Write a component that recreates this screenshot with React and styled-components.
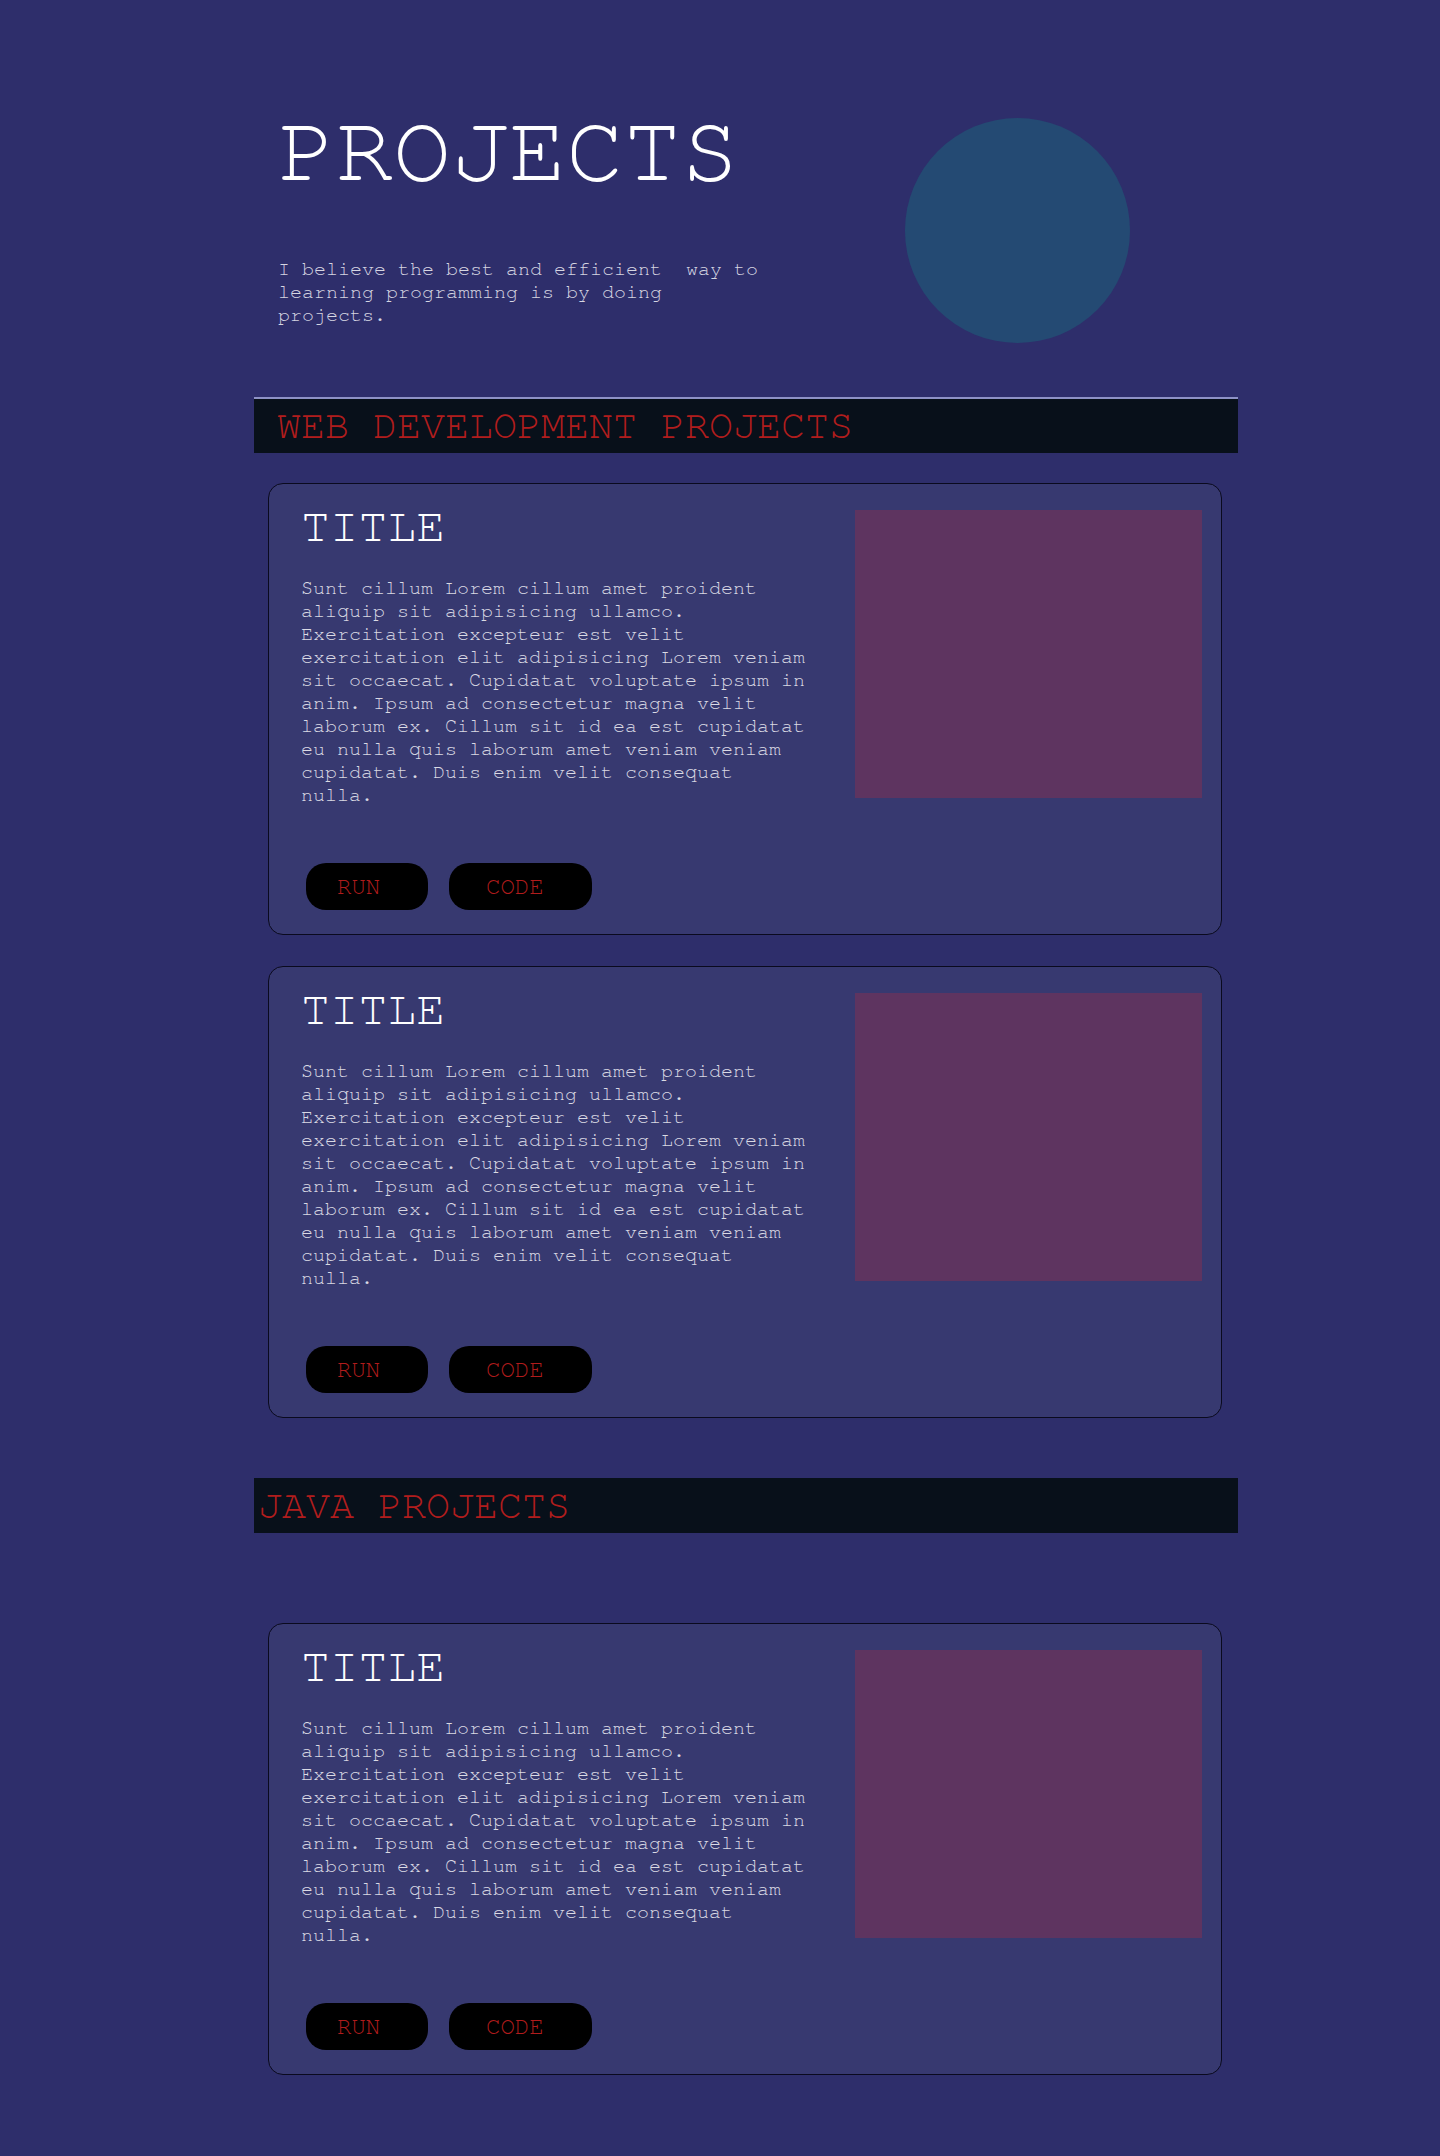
import React from 'react';
import styled, { createGlobalStyle } from 'styled-components';

const GlobalStyle = createGlobalStyle`
  html, body {
    margin: 0;
    padding: 0;
    background-color: #2e2e6b;
  }
  body {
    font-family: "FreeMono", "Nimbus Mono PS", "Nimbus Mono L", "Courier 10 Pitch", "Liberation Mono", monospace;
  }
`;

const Page = styled.div`
  width: 984px;
  margin-left: 254px;
  padding-top: 104px;
  padding-bottom: 79px;
`;

const Hero = styled.header`
  display: flex;
  justify-content: space-between;
  align-items: flex-start;
  padding: 0 108px 0 24px;
  margin-bottom: 54px;
`;

const HeroText = styled.div`
  width: 490px;
`;

const Heading = styled.h1`
  margin: 0 0 60px;
  font-size: 96px;
  line-height: 94px;
  font-weight: normal;
  color: #ffffff;
`;

const Intro = styled.p`
  margin: 0;
  font-size: 20px;
  line-height: 23px;
  color: #d6d6e2;
`;

const Circle = styled.div`
  width: 225px;
  height: 225px;
  margin-top: 14px;
  border-radius: 50%;
  background-color: #244a73;
`;

const SectionBar = styled.h2`
  margin: ${props => props.$gap} 0 0;
  padding: ${props => (props.$lined ? '5px 23px 4px' : '6px 4px 4px')};
  border-top: ${props => (props.$lined ? '2px solid #8e92c6' : 'none')};
  background-color: #08101a;
  color: #b11d1d;
  font-size: 40px;
  line-height: 45px;
  font-weight: normal;
`;

const CardList = styled.div`
  display: flex;
  flex-direction: column;
  gap: 31px;
  margin: ${props => props.$top} 16px 0 14px;
`;

const Card = styled.article`
  display: flex;
  justify-content: space-between;
  padding: 16px 19px 24px 32px;
  border: 1px solid #0a0a1e;
  border-radius: 15px;
  background-color: #373970;
`;

const CardBody = styled.div`
  width: 510px;
`;

const CardTitle = styled.h3`
  margin: 0 0 23px;
  font-size: 48px;
  line-height: 54px;
  font-weight: normal;
  color: #ffffff;
`;

const CardText = styled.p`
  margin: 0 0 56px;
  font-size: 20px;
  line-height: 23px;
  color: #dadae4;
`;

const Actions = styled.div`
  display: flex;
  gap: 21px;
  margin-left: 5px;
`;

const ActionButton = styled.button`
  display: flex;
  align-items: center;
  box-sizing: border-box;
  width: ${props => props.$width}px;
  height: 47px;
  padding: 0 0 0 ${props => props.$indent}px;
  border: none;
  border-radius: 20px;
  background-color: #000000;
  color: #b01c1c;
  font-family: inherit;
  font-size: 24px;
  cursor: pointer;
`;

const Preview = styled.div`
  width: 347px;
  height: 288px;
  margin-top: 10px;
  background-color: #5e3460;
`;

const LOREM =
  'Sunt cillum Lorem cillum amet proident aliquip sit adipisicing ullamco. Exercitation excepteur est velit exercitation elit adipisicing Lorem veniam sit occaecat. Cupidatat voluptate ipsum in anim. Ipsum ad consectetur magna velit laborum ex. Cillum sit id ea est cupidatat eu nulla quis laborum amet veniam veniam cupidatat. Duis enim velit consequat nulla.';

const ProjectCard = ({ title, text }) => (
  <Card>
    <CardBody>
      <CardTitle>{title}</CardTitle>
      <CardText>{text}</CardText>
      <Actions>
        <ActionButton $width={122} $indent={31}>RUN</ActionButton>
        <ActionButton $width={143} $indent={37}>CODE</ActionButton>
      </Actions>
    </CardBody>
    <Preview />
  </Card>
);

const webProjects = [
  { id: 1, title: 'TITLE', text: LOREM },
  { id: 2, title: 'TITLE', text: LOREM },
];

const javaProjects = [{ id: 3, title: 'TITLE', text: LOREM }];

const App = () => (
  <>
    <GlobalStyle />
    <Page>
      <Hero>
        <HeroText>
          <Heading>PROJECTS</Heading>
          <Intro>
            I believe the best and efficient{'\u00a0'} way to learning programming is by doing
            projects.
          </Intro>
        </HeroText>
        <Circle />
      </Hero>

      <SectionBar $lined $gap="0">WEB DEVELOPMENT PROJECTS</SectionBar>
      <CardList $top="30px">
        {webProjects.map(p => (
          <ProjectCard key={p.id} title={p.title} text={p.text} />
        ))}
      </CardList>

      <SectionBar $gap="60px">JAVA PROJECTS</SectionBar>
      <CardList $top="90px">
        {javaProjects.map(p => (
          <ProjectCard key={p.id} title={p.title} text={p.text} />
        ))}
      </CardList>
    </Page>
  </>
);

export default App;
